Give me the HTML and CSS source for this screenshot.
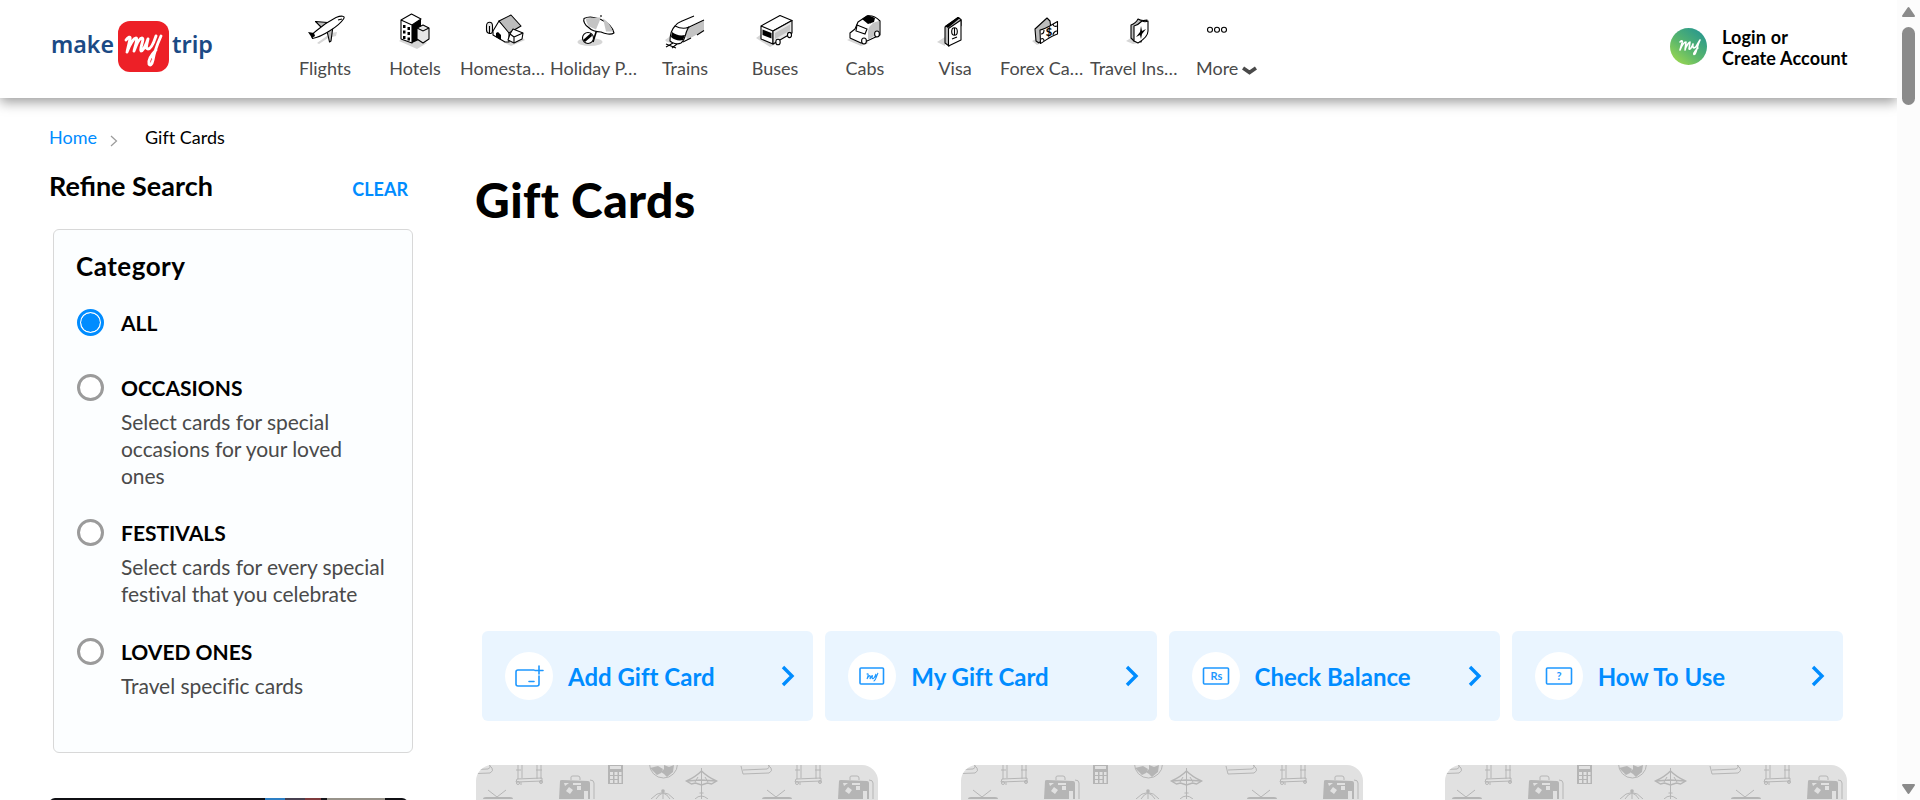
FILE: index.html
```html
<!DOCTYPE html>
<html lang="en">
<head>
<meta charset="utf-8">
<title>Gift Cards</title>
<link rel="stylesheet" href="styles.css">
</head>
<body>
<div class="page">
  <header class="header">
    <a class="logo">
      <svg width="164" height="56" viewBox="0 0 164 56">
        <rect x="68" y="3" width="51" height="51" rx="12" fill="#ed2027"/>
        <text x="1" y="34.500" class="logo-word" textLength="63" lengthAdjust="spacingAndGlyphs">make</text>
        <text x="122" y="34.500" class="logo-word" textLength="41" lengthAdjust="spacingAndGlyphs">trip</text>
        <path class="logo-my" d="M76 22c2-3 5-4 4-1l-3 13c3-8 7-14 9-14 2 0-1 9-2 13 3-8 6-13 8-13 3 0-3 12-1 13 2 0 5-6 7-12-1 5-3 10 0 10s6-7 8-13M111 18c-4 9-7 17-8 24-1 5-3 6-4 4-1-4 2-9 7-14"/>
      </svg>
    </a>
    <nav class="nav">
      <a class="nav-item"><svg class="nav-icon" viewBox="0 0 44 40"><path class="sh" d="M14 34l14-10 6-1-1 4-8 2-9 6z"/><path class="gr" d="M12.500 12.500l12 1-6 5zM24 22l6-5-2 15-1.500 1z"/><path class="wh" d="M9.500 29.500C8 27 9 25 13 22 20 16 28 11 33 8.500c5-2 10-2 7.500 1.500C36 17 19 28 9.500 29.500z"/><path class="bk" d="M5 23l6 1 1 3-3 2z"/><path class="ln" d="M35 11l4-1"/></svg><span class="nav-label">Flights</span></a>
      <a class="nav-item"><svg class="nav-icon" viewBox="0 0 44 40"><path class="sh" d="M6 32l8-5 20 7-10 6z"/><path class="wh" d="M8 11l10.500-6L28 10l-9 6zM8 11l11 5v18L8 30z"/><path class="bk" d="M19 16l9-6v20l-9 4z"/><path class="lt" d="M24 19l6-3 6 3v11l-6 4-6-4z"/><path class="ln" d="M24 19l6 3 6-3"/><path class="bk" d="M10 16h2.500v3H10zM14.500 18H17v3h-2.500zM10 21.500h2.500v3H10zM14.500 23H17v3h-2.500zM10 27h2.500v3H10zM14.500 28.500H17v3h-2.500z"/></svg><span class="nav-label">Hotels</span></a>
      <a class="nav-item"><svg class="nav-icon" viewBox="0 0 44 40"><path class="sh" d="M20 33l17-6 5 4-14 6z"/><path class="lt" d="M3.500 17c0-5 6-5 6 0v5c0 4-6 3-6-1z"/><path class="ln" d="M6.500 17v8"/><path class="wh" d="M10 22l6-10 10 9v12L22 33l-12-7z"/><path class="gr" d="M16 12l12-6 10 11-12 7z"/><path class="bk" d="M13 24l2-1 3 3v5l-5-3z"/><path class="wh" d="M27 25l3-5 10 4-1 6-8 4-6-3z"/><path class="ln" d="M31 28l9-4M31 28l-4-3M31 34v-6"/></svg><span class="nav-label cut">Homesta…</span></a>
      <a class="nav-item"><svg class="nav-icon" viewBox="0 0 44 40"><ellipse class="sh" cx="17" cy="33" rx="12.500" ry="4"/><path class="ln thick" d="M24 20l-4 13"/><path class="wh" d="M11 9.500C19 5 38 12 41 24c-3 2-9 1-13-1-6 0-10-2-13-5-3-2-5-6-4-8.500z"/><path class="gs" d="M13 9.500c7-1 11-1 15-1l-5 12-7-3c-2-3-3-5-3-8zM30 9.500c5 3 8 8 10 13l-7 0z"/><path class="ln" d="M28 8V6"/><circle class="wh" cx="15" cy="29" r="5.500"/><path class="bk" d="M10 31l8-7 1 3-7 6z"/></svg><span class="nav-label cut">Holiday P…</span></a>
      <a class="nav-item"><svg class="nav-icon" viewBox="0 0 44 40"><path class="sh" d="M2 31l7-5-1 8-4-1z"/><path class="wh nb" d="M13 16L31 7l10 4.500L22 24z"/><path class="gs" d="M22 21l19-9.500v10L24 31z"/><path class="ln" d="M12 17Q14 14 18 12.500L31 7M22 20l19-9M20 33l8-4M34 26l7-4.500M3 35l10 4M3 38l7-4M9 39l5-4"/><path class="wh" d="M12 17c4 2 10 3 14 1-4 4-3 13-8 16-4 2-9 0-11-2 0-6 1-11 5-15z"/><path class="bk" d="M9 23c4 3 8 4 13 3l-2 5c-4 1-9 0-12-3z"/></svg><span class="nav-label">Trains</span></a>
      <a class="nav-item"><svg class="nav-icon" viewBox="0 0 44 40"><path class="sh" d="M3 29l7-5 15 10-8 4z"/><path class="wh" d="M8 17L27 6.500l12 5L20 22zM8 17l12 5v13L8 30z"/><path class="lt" d="M20 22l19-10.500V24L20 35z"/><path class="bk" d="M9.500 20.500l9 3.500v5.500l-9-3.500z"/><path class="gs" d="M22 24l15-8.500v6L22 30z"/><ellipse class="wh" cx="25" cy="33" rx="2.200" ry="2.800"/><ellipse class="wh" cx="36.500" cy="26" rx="2" ry="2.600"/></svg><span class="nav-label">Buses</span></a>
      <a class="nav-item"><svg class="nav-icon" viewBox="0 0 44 40"><path class="sh" d="M4 31l9-4 13 7-8 3z"/><path class="wh" d="M7 24l5-4 3-7 9-6c6-1 11 3 13 5v14l-13 6-6 2-11-5z"/><path class="gs" d="M25 23c0-6 5-10 11-11v12l-11 7z"/><path class="bk" d="M19 10l6-4 7 3-1 4-6 2z"/><path class="ln" d="M14 16l10 4-2 5-9-3zM21 10l7 4"/><ellipse class="wh" cx="21" cy="32" rx="2.400" ry="3"/><ellipse class="wh" cx="34" cy="25" rx="2.400" ry="3"/></svg><span class="nav-label">Cabs</span></a>
      <a class="nav-item"><svg class="nav-icon" viewBox="0 0 44 40"><path class="sh" d="M4 33l8-5v9z"/><path class="gr" d="M12 18L25 8.500l3 2v6L16 37l-4-3z"/><path class="wh" d="M15.500 19.500L28 11v20L15.500 37z"/><path class="bk" d="M12 17L25 8l2 1-12 10z"/><ellipse class="ln" cx="21.500" cy="22.500" rx="2.800" ry="3.800"/><path class="ln" d="M21.500 19v7M19 30l5-2"/></svg><span class="nav-label">Visa</span></a>
      <a class="nav-item"><svg class="nav-icon" viewBox="0 0 44 40"><path class="sh" d="M9 32l6-3 3 5-4 2z"/><path class="gr" d="M12 20l12-11 3 3 1 8-12 14-3-2z"/><path class="wh" d="M17 21c6-1 11-5 17.500-8.500V25c-7 2-11 6-17 9.500z"/><path class="ln" d="M18 25c2 0 3-2 3-4M30 15c0 2 2 3 4 2M18 30c2-1 3 0 3 2M30 26c0-2 2-4 4-4"/><text x="26" y="27" text-anchor="middle" class="cash">$</text></svg><span class="nav-label cut">Forex Ca…</span></a>
      <a class="nav-item"><svg class="nav-icon" viewBox="0 0 44 40"><path class="sh" d="M13 32l5-3 8 5-6 1z"/><path class="gr" d="M18 16c3-1 6-4 7-6 3 2 5 2 9 1l-6 22-7-1-3-3z"/><path class="wh" d="M21 17c4-1 6-3 8-5 2 1 4 1 6 0v10c0 5-5 9-10 12l-4-2z"/><path class="bk" d="M28 17l1 5 4-2-4 5-1 5-1-4-4 2 4-5z"/></svg><span class="nav-label cut">Travel Ins…</span></a>
      <a class="nav-item more"><svg class="nav-icon" viewBox="0 0 44 40"><g class="ln"><circle cx="16" cy="20.700" r="2.500"/><circle cx="23" cy="20.700" r="2.500"/><circle cx="30" cy="20.700" r="2.500"/></g></svg><span class="nav-label">More<svg class="caret" width="15" height="9" viewBox="0 0 15 9"><path d="M1 2l6.500 4.500L14 2"/></svg></span></a>
    </nav>
    <a class="login">
      <svg width="37" height="37" viewBox="0 0 37 37">
        <defs><linearGradient id="avatar" x1="0.1" y1="1" x2="0.9" y2="0"><stop offset="0.050" stop-color="#9cd850"/><stop offset="0.450" stop-color="#59b66c"/><stop offset="1" stop-color="#219393"/></linearGradient></defs>
        <circle cx="18.500" cy="18.500" r="18.500" fill="url(#avatar)"/>
        <path class="avatar-my" d="M10 14c2-2 3-1 2 1l-2 7c2-5 4-8 6-8l-1 8c1-4 4-8 5-8l-1 7c1 1 3-2 4-5-1 5 2 5 4 1l3-5c-3 6-3 11-5 14-2 2-2-2 3-6"/>
      </svg>
      <span>Login or<br>Create Account</span>
    </a>
  </header>

  <div class="crumbs">
    <a class="crumb-link">Home</a>
    <svg width="8" height="12" viewBox="0 0 8 12"><path d="M1 1l5.500 5L1 11"/></svg>
    <span>Gift Cards</span>
  </div>

  <div class="content">
    <aside class="side">
      <div class="refine"><h2 class="lig">Refine Search</h2><a>CLEAR</a></div>
      <section class="filters">
        <h2>Category</h2>
        <label class="option first"><i class="radio on"></i><span><b>ALL</b></span></label>
        <label class="option second"><i class="radio"></i><span><b>OCCASIONS</b><em>Select cards for special occasions for your loved ones</em></span></label>
        <label class="option"><i class="radio"></i><span><b>FESTIVALS</b><em>Select cards for every special festival that you celebrate</em></span></label>
        <label class="option"><i class="radio"></i><span><b>LOVED ONES</b><em class="lig">Travel specific cards</em></span></label>
      </section>
      <div class="promo"></div>
    </aside>

    <main class="main">
      <h1>Gift Cards</h1>
      <div class="actions">
        <a class="action"><i><svg viewBox="0 0 48 48"><path d="M29 18H13q-2 0-2 2v12q0 2 2 2h19q2 0 2-2v-8M24 29.500h5M30 18.500h8M34 14v8"/></svg></i><span>Add Gift Card</span><svg class="arrow" viewBox="0 0 14 22"><path d="M2 2l9 9-9 9"/></svg></a>
        <a class="action"><i><svg viewBox="0 0 48 48"><rect x="12" y="16" width="23.500" height="16" rx="1"/><path class="thin" d="M19 22c2-1 1 2 0 5 2-4 4-5 3 0 2-4 3-5 2-1 1 2 3-1 4-4-2 4 0 4 2-1-2 4-2 7-4 8"/></svg></i><span>My Gift Card</span><svg class="arrow" viewBox="0 0 14 22"><path d="M2 2l9 9-9 9"/></svg></a>
        <a class="action"><i><svg viewBox="0 0 48 48"><rect x="11.500" y="16" width="25" height="16" rx="1"/><text x="24.500" y="28" text-anchor="middle">Rs</text></svg></i><span>Check Balance</span><svg class="arrow" viewBox="0 0 14 22"><path d="M2 2l9 9-9 9"/></svg></a>
        <a class="action"><i><svg viewBox="0 0 48 48"><rect x="11.500" y="16" width="25" height="16" rx="1"/><text x="24" y="28" text-anchor="middle">?</text></svg></i><span>How To Use</span><svg class="arrow" viewBox="0 0 14 22"><path d="M2 2l9 9-9 9"/></svg></a>
      </div>
      <div class="cards">
        <div class="card"><svg width="402" height="34" viewBox="0 0 402 34">
          <defs>
            <g id="tile">
              <g class="doodle"><path d="M-14 1l2 8 26-1q4-2 2-5l-3-3M-12 5l24-1q3-1 2-4M42 0v14M46 0v13M61 0v14M65 0v14M40 5h5M60 5h6M41 14l25-1v3l-26 1zM45 17v3M65 15v3"/><circle cx="42" cy="18" r="1.500"/><circle cx="65" cy="17" r="1.500"/></g>
              <g class="solid"><path d="M84 16q0-1 2-1l26 1q2 0 2 2v16H83zM7 34q0-2 3-2h24q3 0 3 2z"/><path d="M132 0h15v19h-15z"/></g>
              <g class="doodle"><path d="M95 15v-3q0-1 2-1h5q2 0 2 2v2M114 15q4 0 4 3v16M12 25l9 7 9-7"/></g>
              <path class="hole" d="M90 26l3-4 4 3-3 4zM101 21h4v4h-4zM108 26h4v8h-4zM88 18h5l-4 3zM97 18h8v2h-8zM134 1h11v3h-11zM134 7h3v3h-3zM138.500 7h3v3h-3zM143 7h2.500v3H143zM134 11h3v3h-3zM138.500 11h3v3h-3zM143 11h2.500v7H143zM134 15h3v3h-3zM138.500 15h3v3h-3z"/>
              <circle class="globe" cx="187.500" cy="-1" r="14"/><path class="solid" d="M174 3l8-2 5 3-2 4-4 2zM188 0l5 2 5-2-1 7-6 5-3-3-3-2 3-3z"/>
              <path class="doodle bold" d="M225.500 6q-6 6-15 10l5 3 4-1 6 2 6-2 4 1 5-3q-9-4-15-10zM211 16l14-1 15 1"/>
              <path class="doodle" d="M225.500 3v17M225.500 20v14M223.500 28h4M219 17l3-5M232 17l-3-5M175 34q12-13 23 0M187 26v8M180 34q3-5 7-6M194 34q-3-5-7-6M219 34q6-6 13 0"/>
              <circle class="solid" cx="187" cy="26" r="1.800"/>
            </g>
          </defs>
          <use href="#tile"/><use href="#tile" x="279"/></svg></div>
        <div class="card"><svg width="402" height="34" viewBox="0 0 402 34"><use href="#tile"/><use href="#tile" x="279"/></svg></div>
        <div class="card"><svg width="402" height="34" viewBox="0 0 402 34"><use href="#tile"/><use href="#tile" x="279"/></svg></div>
      </div>
    </main>
  </div>
</div>
<div class="scrollbar">
  <svg width="15" height="12" viewBox="0 0 15 12"><path d="M7.500 2L13 10H2z"/></svg>
  <div class="thumb"></div>
  <svg class="down" width="15" height="12" viewBox="0 0 15 12"><path d="M2 2h11l-5.500 8z"/></svg>
</div>
</body>
</html>
```
FILE: styles.css
```css
* { box-sizing: border-box; }
body { margin: 0; height: 800px; overflow: hidden; display: flex; background: #fff; color: #000; font-family: Lato, "Liberation Sans", sans-serif; font-variant-ligatures: none; }
h1, h2 { margin: 0; }
i, em { font-style: normal; }
.lig { font-variant-ligatures: normal; }
.page { width: 1897px; height: 800px; overflow: hidden; }

.header { height: 98px; display: flex; align-items: flex-start; background: #fff; box-shadow: 0 4px 12px rgba(0, 0, 0, 0.4); }
.logo { width: 164px; margin: 18px 65px 0 50px; }
.logo svg { display: block; }
.logo-word { font: 600 24px "Noto Sans", "Open Sans", sans-serif; fill: #1b4a85; }
.logo-my { fill: none; stroke: #fff; stroke-width: 2.9; stroke-linecap: round; stroke-linejoin: round; }
.nav { display: flex; margin-left: 1px; }
.nav-item { width: 90px; padding: 9px 1px 0; display: flex; flex-direction: column; align-items: center; color: #4a4a4a; }
.nav-icon { width: 44px; height: 40px; display: block; fill: none; }
.nav-label { margin-top: 8px; font-size: 18px; line-height: 22px; white-space: nowrap; }
.nav-label.cut { align-self: flex-start; margin-left: -1px; }
.more { width: 80px; align-items: flex-start; padding-left: 16px; }
.more .nav-icon { margin-left: -2px; }
.caret { margin-left: 4px; vertical-align: 0; }
.caret path { fill: none; stroke: #4a4a4a; stroke-width: 3.8; }
.sh { fill: #d6d6d6; }
.gs { fill: #c4c4c4; }
.bk { fill: #000; }
.wh { fill: #fff; stroke: #000; stroke-width: 1.1; stroke-linejoin: round; }
.nb { stroke: none; }
.lt { fill: #e6e6e6; stroke: #000; stroke-width: 1.1; stroke-linejoin: round; }
.gr { fill: #bdbdbd; stroke: #000; stroke-width: 1.1; stroke-linejoin: round; }
.ln { fill: none; stroke: #000; stroke-width: 1.1; }
.thick { stroke-width: 1.6; }
.cash { font: 900 11px Lato, sans-serif; fill: #000; }
.login { margin: 28px 48px 0 auto; display: flex; gap: 15px; font-weight: 700; font-size: 18px; line-height: 21px; letter-spacing: 0.15px; }
.login span { width: 127px; margin-top: -1px; white-space: nowrap; }
.avatar-my { fill: none; stroke: #fff; stroke-width: 1.6; stroke-linecap: round; stroke-linejoin: round; }

.crumbs { display: flex; align-items: center; height: 22px; margin: 28px 0 0 49px; font-size: 18px; }
.crumbs svg { margin: 7px 27px 0 13px; fill: none; stroke: #9b9b9b; stroke-width: 1.2; }
.crumb-link { color: #008cff; }

.content { display: flex; padding-left: 49px; }
.side { width: 364px; }
.refine { display: flex; justify-content: space-between; align-items: baseline; padding-right: 5px; margin-top: 22px; height: 59px; }
.refine h2, .filters h2 { font-size: 26px; line-height: 32px; font-weight: 700; letter-spacing: 0.5px; }
.refine h2 { font-feature-settings: "liga" 1; font-size: 27px; letter-spacing: 0; }
.refine a { color: #008cff; font-weight: 700; font-size: 18px; }
.filters { height: 524px; margin-left: 4px; padding: 20px 22px 20px 23px; border: 1px solid #d8d8d8; border-radius: 6px; background: #fcfeff; }
.filters h2 { margin-left: -1px; }
.option { display: flex; gap: 17px; margin-bottom: 29px; }
.option.first { margin: 25px 0 34px; height: 31px; }
.option.second { margin-bottom: 28px; }
.radio { width: 27px; height: 27px; flex: none; margin-top: 2px; border-radius: 50%; border: 3px solid #9b9b9b; background: #fff; }
.radio.on { border-color: #008cff; padding: 1px; background: #008cff content-box; box-shadow: inset 0 0 0 1px #fff; }
.option b { display: block; font-size: 21px; line-height: 32px; }
.option em { display: block; margin-top: 4px; font-size: 21px; line-height: 27px; letter-spacing: -0.05px; color: #4a4a4a; }
.promo { height: 20px; margin: 45px 5px 0 0; border-radius: 6px; background: linear-gradient(90deg, #101014 0 216px, #2d7fc4 216px 236px, #474050 236px 256px, #7f3a3c 256px 272px, #17151a 272px 278px, #98938a 278px 336px, #101014 336px); }

.main { padding-left: 63px; width: 1434px; }
h1 { margin: 22px 0 0 -1px; font-size: 48px; line-height: 60px; font-weight: 900; letter-spacing: 0.4px; }
.actions { display: flex; gap: 12px; margin: 401px 0 0 6px; width: 1361px; }
.action { flex: 1; height: 90px; display: flex; align-items: center; padding: 0 18px 0 23px; border-radius: 6px; background: #eaf5ff; color: #008cff; font-size: 24px; font-weight: 700; white-space: nowrap; }
.action i { width: 48px; height: 48px; margin-right: 15px; border-radius: 50%; background: #fff; }
.action i svg { display: block; fill: none; stroke: #1e98ff; stroke-width: 1.6; stroke-linecap: round; }
.action i .thin { stroke-width: 1.1; }
.action i text { font: 700 11px Lato, sans-serif; fill: #1e98ff; stroke: none; }
.arrow { width: 14px; height: 22px; margin-left: auto; fill: none; stroke: #008cff; stroke-width: 3.4; }
.cards { display: flex; justify-content: space-between; width: 1371px; margin-top: 44px; }
.card { width: 402px; height: 60px; border-radius: 16px; overflow: hidden; background: #e1e1e1; }
.card svg { display: block; }
.doodle { fill: none; stroke: #b5b5b5; stroke-width: 1; }
.bold { stroke-width: 1.4; }
.solid { fill: #b5b5b5; }
.hole { fill: #e1e1e1; }
.globe { fill: #e1e1e1; stroke: #b5b5b5; }

.scrollbar { width: 23px; height: 800px; background: #fcfcfc; display: flex; flex-direction: column; align-items: center; padding: 6px 0 5px; }
.scrollbar path { fill: #8b8b8b; stroke: #8b8b8b; stroke-width: 2; stroke-linejoin: round; }
.thumb { width: 13px; height: 78px; margin-top: 9px; border-radius: 7px; background: #8b8b8b; }
.down { margin-top: auto; }
```
